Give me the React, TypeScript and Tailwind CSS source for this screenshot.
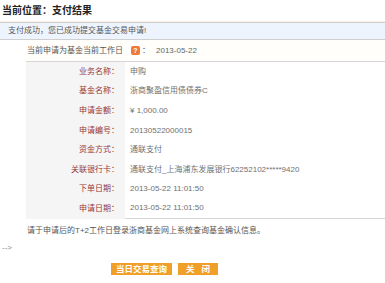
const font = "font-['Liberation_Sans','Noto_Sans_CJK_SC',sans-serif]"

const rows: [string, string][] = [
  ['业务名称：', '申购'],
  ['基金名称：', '浙商聚盈信用债债券C'],
  ['申请金额：', '¥ 1,000.00'],
  ['申请编号：', '20130522000015'],
  ['资金方式：', '通联支付'],
  ['关联银行卡：', '通联支付_上海浦东发展银行62252102*****9420'],
  ['下单日期：', '2013-05-22 11:01:50'],
  ['申请日期：', '2013-05-22 11:01:50'],
]

// 支付结果页：旧式基金交易回执
export default function App() {
  return (
    <div className={`${font} h-[283px] w-[385px] overflow-hidden bg-white text-[8px] text-[#555]`}>
      <div className="flex h-[22px] items-center border-b border-[#f6f0e2] pl-[2px] text-[10px] font-bold text-[#222]">
        当前位置：支付结果
      </div>
      <div className="flex h-[18px] items-center border-y border-[#cfcfcf] bg-[#eef4fd] pl-[8px] text-[#555]">
        支付成功，您已成功提交基金交易申请!
      </div>
      <div className="ml-[26px]">
        <div className="flex h-[22px] items-center border-b border-[#d6d6d6] bg-[#fffefa] pl-[1px]">
          <span>当前申请为基金当前工作日</span>
          <span className="ml-[8px] flex h-[9px] w-[9px] items-center justify-center rounded-[2px] bg-[#ee7a3a] text-[7px] font-bold leading-none text-white">
            ?
          </span>
          <span className="ml-[2px] mr-[6px]">：</span>
          <span className="text-[#666]">2013-05-22</span>
        </div>
        <div className="grid grid-cols-[99px_1fr]">
          {rows.map(([label, value], i) => (
            <div key={label} className="contents">
              <div className="flex h-[19.6px] items-center justify-end bg-[#f5f5f5] pr-[6px] text-[#963838]">{label}</div>
              <div
                className={`flex h-[19.6px] items-center whitespace-nowrap pl-[5px] text-[#707070] ${
                  i === rows.length - 1 ? 'border-b border-[#d6d6d6]' : ''
                }`}
              >
                {value}
              </div>
            </div>
          ))}
        </div>
        <div className="flex h-[24px] items-center pl-[1px] text-[#555]">
          请于申请后的T+2工作日登录浙商基金网上系统查询基金确认信息。
        </div>
      </div>
      <div className="flex h-[10px] items-center pl-[2px] text-[#888]">--&gt;</div>
      <div className="mt-[10px] flex items-center gap-[6px] pl-[111px]">
        <button className="flex h-[12px] w-[61px] items-center justify-center bg-[#f0a028] text-[8.5px] font-bold leading-none text-white">
          当日交易查询
        </button>
        <button className="flex h-[12px] w-[40px] items-center justify-center gap-[7px] bg-[#f0a028] text-[8.5px] font-bold leading-none text-white">
          <span>关</span>
          <span>闭</span>
        </button>
      </div>
    </div>
  )
}
